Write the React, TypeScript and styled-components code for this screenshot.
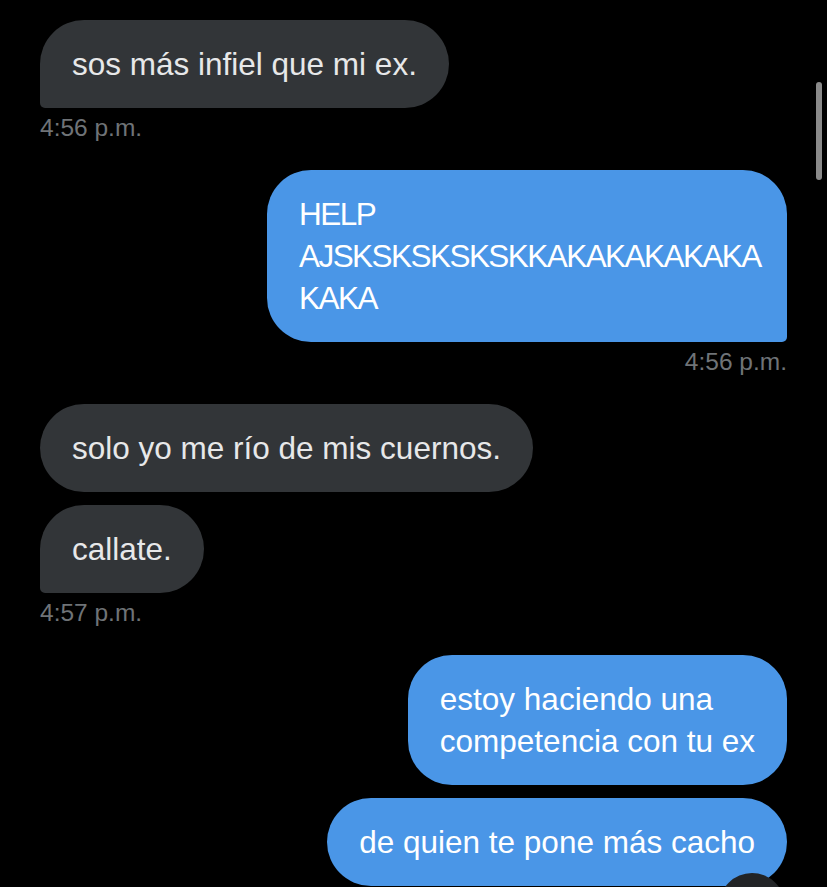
import styled, { createGlobalStyle } from 'styled-components';

const GlobalStyle = createGlobalStyle`
  html, body {
    margin: 0;
    padding: 0;
    background: #000;
  }
`;

const Screen = styled.div`
  position: relative;
  width: 827px;
  height: 887px;
  overflow: hidden;
  background: #000;
  font-family: 'Liberation Sans', Arial, sans-serif;
`;

const Thread = styled.div`
  display: flex;
  flex-direction: column;
  padding: 20px 40px 0;
`;

const Group = styled.div<{ $mine?: boolean }>`
  display: flex;
  flex-direction: column;
  align-items: ${(p) => (p.$mine ? 'flex-end' : 'flex-start')};
  gap: 13px;
`;

const Bubble = styled.div<{ $mine?: boolean; $tail?: boolean; $tight?: boolean }>`
  box-sizing: border-box;
  max-width: 520px;
  padding: 23px 32px;
  font-size: 31.5px;
  line-height: 42px;
  letter-spacing: ${(p) => (p.$tight ? '-1.55px' : '0')};
  color: ${(p) => (p.$mine ? '#ffffff' : '#e7e8e9')};
  background: ${(p) => (p.$mine ? '#4a96e7' : '#323538')};
  border-radius: 44px;
  ${(p) =>
    p.$tail && p.$mine ? 'border-bottom-right-radius: 5px;' : ''}
  ${(p) =>
    p.$tail && !p.$mine ? 'border-bottom-left-radius: 5px;' : ''}
`;

// gap of the group (13px) minus 7 gives the 6px under the bubble
const Stamp = styled.div`
  margin: -7px 0 28px;
  font-size: 24.5px;
  line-height: 28px;
  color: #6f7377;
`;

const Scrollbar = styled.div`
  position: absolute;
  top: 82px;
  right: 5px;
  width: 6px;
  height: 98px;
  border-radius: 3px;
  background: #8a8a8a;
`;

const ScrollButton = styled.div`
  position: absolute;
  left: 719px;
  top: 873px;
  width: 66px;
  height: 66px;
  border-radius: 50%;
  background: #222426;
`;

export default function App() {
  return (
    <Screen>
      <GlobalStyle />
      <Thread>
        <Group>
          <Bubble $tail>sos más infiel que mi ex.</Bubble>
          <Stamp>4:56 p.m.</Stamp>
        </Group>
        <Group $mine>
          <Bubble $mine $tail $tight>
            HELP
            <br />
            AJSKSKSKSKSKKAKAKAKAKAKA
            <br />
            KAKA
          </Bubble>
          <Stamp>4:56 p.m.</Stamp>
        </Group>
        <Group>
          <Bubble>solo yo me río de mis cuernos.</Bubble>
          <Bubble $tail>callate.</Bubble>
          <Stamp>4:57 p.m.</Stamp>
        </Group>
        <Group $mine>
          <Bubble $mine>
            estoy haciendo una
            <br />
            competencia con tu ex
          </Bubble>
          <Bubble $mine>de quien te pone más cacho</Bubble>
        </Group>
      </Thread>
      <Scrollbar />
      <ScrollButton />
    </Screen>
  );
}
